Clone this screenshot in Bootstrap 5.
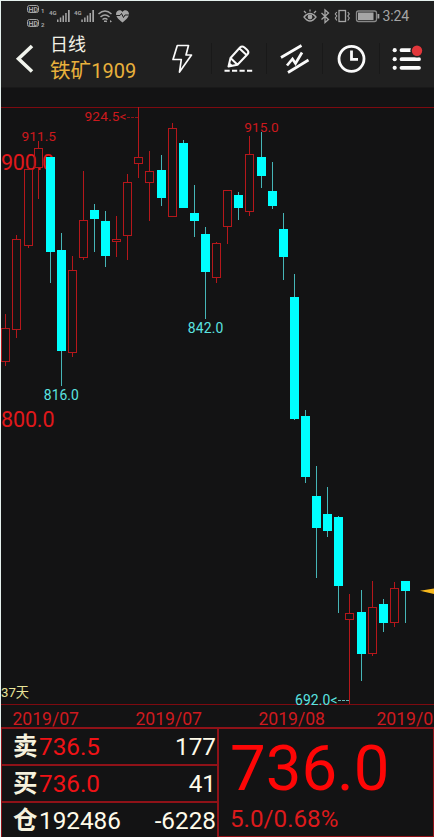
<!DOCTYPE html>
<html lang="zh-CN">
<head>
<meta charset="utf-8">
<meta name="viewport" content="width=device-width, initial-scale=1">
<title>铁矿1909 日线</title>
<link href="https://cdn.jsdelivr.net/npm/bootstrap@5.3.0/dist/css/bootstrap.min.css" rel="stylesheet">
<style>
body{background:#131314;font-family:Roboto,"Noto Sans CJK SC",sans-serif;color:#fffbe9;line-height:1}
.app{width:434px;height:837px;border-top:1px solid #e6f1ee;border-left:1px solid #e6f1ee}
.topbar{height:87px;background:#202020;border-bottom:1px solid #191919}
.status{height:31px}
.tools{height:55px}
.back{width:49px}
.titles{width:105px;white-space:nowrap}
.period{font-size:18px;line-height:22px;padding-top:2px;color:#f3f1e6}
.contract{font-size:20.6px;line-height:27px;padding-top:2px;color:#e9b13c}
.contract span{font-size:20px}
.chart{height:639px}
.chart svg,.tools svg,.status svg{display:block}
.chart text{font-family:Roboto,"Noto Sans CJK SC",sans-serif}
.panel{height:110px}
.orders{width:218px;border-right:2px solid #8f1218;border-left:1px solid #8f1218}
.order{height:37px;border-top:2px solid #8f1218;font-size:24.3px;padding:1px 1px 0 11px}
.order b{font-weight:700;font-size:24.5px;width:26px;color:#f6f2de}
.up{color:#f01216}
.last{border-top:2px solid #8f1218;border-right:1px solid #8f1218;border-bottom:1px solid #8f1218;padding-left:11px}
.price{font-size:63.5px;line-height:74px;color:#fe0606;padding-top:3px}
.change{font-size:24.2px;line-height:26px;color:#dc1a1c}
</style>
<script src="https://cdn.jsdelivr.net/npm/bootstrap@5.3.0/dist/js/bootstrap.bundle.min.js"></script>
</head>
<body>
<main class="app d-flex flex-column overflow-hidden">
<header class="topbar flex-shrink-0">
  <div class="status">
    <svg width="433" height="31" viewBox="1 1 433 31" fill="#a5a5a5" font-family="Roboto,sans-serif">
      <g fill="none" stroke="#a5a5a5" stroke-width="1"><rect x="27.5" y="5.500" width="11" height="7" rx="2"/><rect x="27.500" y="19.500" width="11" height="7" rx="2"/></g>
      <g font-size="7" font-weight="700"><text x="28.500" y="11.600" textLength="9.500">HD</text><text x="28.500" y="25.600" textLength="9.500">HD</text></g>
      <g font-size="6" font-weight="700"><text x="41" y="13">1</text><text x="41" y="27">2</text><text x="49" y="15" textLength="7.500">4G</text><text x="74" y="15" textLength="7.500">4G</text></g>
      <path id="sig" d="M57 19.500h1.500v2.500H57zM59.800 17.500h1.500v4.500h-1.500zM62.500 15.500H64V22h-1.500zM65.200 13h1.500v9h-1.500zM68 10h1.700v12H68z"/>
      <use href="#sig" x="24.300"/>
      <g fill="none" stroke="#a5a5a5" stroke-width="1.500"><path d="M98.500 14q6.500-6 13 0M100.500 17q4.500-4 9 0M102.500 19.500q2.500-2 5 0"/></g>
      <path d="M104 20.500h2.200V22H104zM107 20l-1 1.500 1 1zM110 20l2 1.500-2 1z"/>
      <path d="M122.500 22.500C118 19 116 16.500 116 14c0-4 5-5 6.500-2 1.500-3 6.500-2 6.500 2 0 2.500-2 5-6.500 8.500z"/>
      <path d="M116 15.500h4l1.500-2 2 4 1.500-2.500h4" fill="none" stroke="#202020"/>
      <g fill="none" stroke="#a5a5a5" stroke-width="1.300">
        <path d="M304 17q6-7 12 0-6 8-12 0zM306 13l-2-2M310 11.500V9.500M314 13l2-2"/>
        <path d="M321.500 13l7 6.500-3.500 3V10l3.500 3-7 6.500"/>
        <rect x="339" y="10.500" width="6.500" height="11"/><path d="M336.800 12l-1.500 2 1.500 2-1.500 2 1.500 2.500M347.800 12l1.500 2-1.500 2 1.500 2-1.500 2.500" stroke-width="1.100"/>
        <rect x="356.500" y="11" width="20" height="10.500" rx="2" stroke="#888"/>
      </g>
      <circle cx="310" cy="17" r="2.400"/><rect x="358" y="12.500" width="15.500" height="7.500"/><path d="M377.500 14h1.800v4.500h-1.800z"/>
      <text x="382.500" y="21" font-size="14" textLength="26.500">3:24</text>
    </svg>
  </div>
  <div class="tools d-flex">
    <div class="back"><svg width="49" height="55" viewBox="1 32 49 55"><path d="M32 46L18.500 58.800 32 71.500" fill="none" stroke="#f1f4ed" stroke-width="3.600"/></svg></div>
    <div class="titles"><div class="period">日线</div><div class="contract">铁矿<span>1909</span></div></div>
    <svg width="279" height="55" viewBox="155 32 279 55" fill="none" stroke="#fafafa" stroke-width="2">
      <path d="M211.500 43v31M266.500 43v31M322.500 43v31M379.500 43v31" stroke="#191919" stroke-width="1"/>
      <path d="M177.300 45.500h11.200l-2.500 9.500h5.500L179.500 72l1.800-12.500h-8.300z" stroke-width="1.700" stroke-linejoin="round"/>
      <path d="M228.500 66.500l2-8.500 9.500-10.500q2-2 4.500 0l2.500 2.200q2.500 2.300.5 4.600L237.500 64.800zM230.500 58l7 6.800M239.500 48.500l7 6.500" stroke-linejoin="round"/>
      <path d="M229 67l1-4 3 2.500z" fill="#fafafa" stroke="none"/>
      <path d="M224.500 70.700h28" stroke-dasharray="5.200 2.300"/>
      <path d="M281 57.500L301.500 45.500M288 72.500l20.500-12.500M287 65.500l5.500-6.500 3 4.500 6.500-11" stroke-width="2.700"/>
      <circle cx="351.500" cy="58.800" r="12.500" stroke-width="2.800"/><path d="M351.500 50.500v8.800h6.500" stroke-width="2.800"/>
      <path d="M401.500 50.200h10M401.500 59.200h17.500M401.500 67.800h17.500" stroke-width="3.800" stroke-linecap="round"/>
      <g stroke="none"><circle cx="394.700" cy="50.200" r="2.100" fill="#fafafa"/><circle cx="394.700" cy="59.200" r="2.100" fill="#fafafa"/><circle cx="394.700" cy="67.800" r="2.100" fill="#fafafa"/><circle cx="417" cy="50.700" r="6.700" fill="#202020"/><circle cx="417" cy="50.700" r="5.200" fill="#e2373b"/></g>
    </svg>
  </div>
</header>
<section class="chart flex-shrink-0">
  <svg width="433" height="639" viewBox="1 88 433 639">
    <path d="M1 107.500h433M1 704.500h433" stroke="#7d0a10"/>
    <g fill="#e0181b" font-size="21.500"><text x="1" y="169.500" textLength="53">900.0</text><text x="1" y="427" textLength="53.500">800.0</text></g>
    <g id="candles" shape-rendering="crispEdges"></g>
    <g fill="#cc191d" font-size="13.700"><text x="21.500" y="140.500" textLength="34.500">911.5</text><text x="84.500" y="121" textLength="42">924.5&lt;</text><text x="244.300" y="131.500" textLength="34.500">915.0</text></g>
    <path d="M127 117.500h11" stroke="#8b1519" stroke-dasharray="3 1"/>
    <g fill="#5be4e1" font-size="13.900"><text x="43.800" y="400" textLength="35">816.0</text><text x="187.800" y="332.500" textLength="35.500">842.0</text><text x="295" y="704.500" textLength="42.500">692.0&lt;</text></g>
    <path d="M338 700.500h12" stroke="#62b6b4" stroke-dasharray="3 1"/>
    <text x="1" y="696.500" font-size="13.200" fill="#e8e59a">37天</text>
    <g fill="#ce1a1f" font-size="17.600"><text x="12.500" y="724.500" textLength="66.500">2019/07</text><text x="135.500" y="724.500" textLength="66.500">2019/07</text><text x="258.500" y="724.500" textLength="66.500">2019/08</text><text x="376.500" y="724.500" textLength="66.500">2019/08</text></g>
    <path d="M420 590.800l14-2.300v5.500z" fill="#f8b91d"/>
  </svg>
</section>
<section class="panel d-flex flex-shrink-0">
  <div class="orders flex-shrink-0">
    <div class="order d-flex align-items-center"><b>卖</b><span class="up">736.5</span><span class="ms-auto">177</span></div>
    <div class="order d-flex align-items-center"><b>买</b><span class="up">736.0</span><span class="ms-auto">41</span></div>
    <div class="order d-flex align-items-center"><b>仓</b><span>192486</span><span class="ms-auto">-6228</span></div>
  </div>
  <div class="last flex-grow-1"><div class="price">736.0</div><div class="change">5.0/0.68%</div></div>
</section>
</main>
<script>
// centre x, wick top, body top, body bottom, wick bottom, 1 = rising
const days=[[5,314,328,361,366,1],[16,235,239,329,338,1],[28,168,169,245,248,1],[38,141,148,167,199,1],[50,157,157,252,283,0],[61,233,250,351,386,0],[72,256,270,352,357,1],[83,171,220,257,260,1],[94,204,210,219,252,0],[105,211,221,256,267,0],[116,216,239,241,257,1],[127,174,182,235,260,1],[138,107,157,163,178,1],[149,151,171,182,221,1],[161,155,170,198,206,0],[172,123,128,216,217,1],[183,140,143,208,208,0],[194,185,213,221,237,0],[205,227,234,272,319,0],[216,242,243,277,283,1],[227,190,190,226,244,1],[238,192,195,208,220,0],[249,136,154,211,216,1],[261,132,157,176,188,0],[272,162,191,206,209,0],[283,213,229,257,280,0],[294,274,297,419,420,0],[305,410,416,477,483,0],[316,466,496,528,578,0],[327,487,514,531,537,0],[338,516,517,586,613,0],[349,594,613,619,704,1],[361,590,612,654,681,0],[372,581,607,653,656,1],[383,599,604,623,632,0],[394,582,588,622,627,1],[405,581,581,591,623,0]];
document.getElementById('candles').innerHTML=days.map(([x,h,t,b,l,up])=>{
  const c=x+.5;
  return up
    ? `<path d="M${c} ${h}V${t}M${c} ${b}V${l}M${c-4} ${t+.5}h8V${b+.5}h-8z" fill="none" stroke="#b5171b"/>`
    : `<path d="M${c} ${h}V${l}" stroke="#46b5b7"/><path d="M${c-4.5} ${t}h9V${b}h-9z" fill="#00ffff"/>`;
}).join('');
</script>
</body>
</html>
